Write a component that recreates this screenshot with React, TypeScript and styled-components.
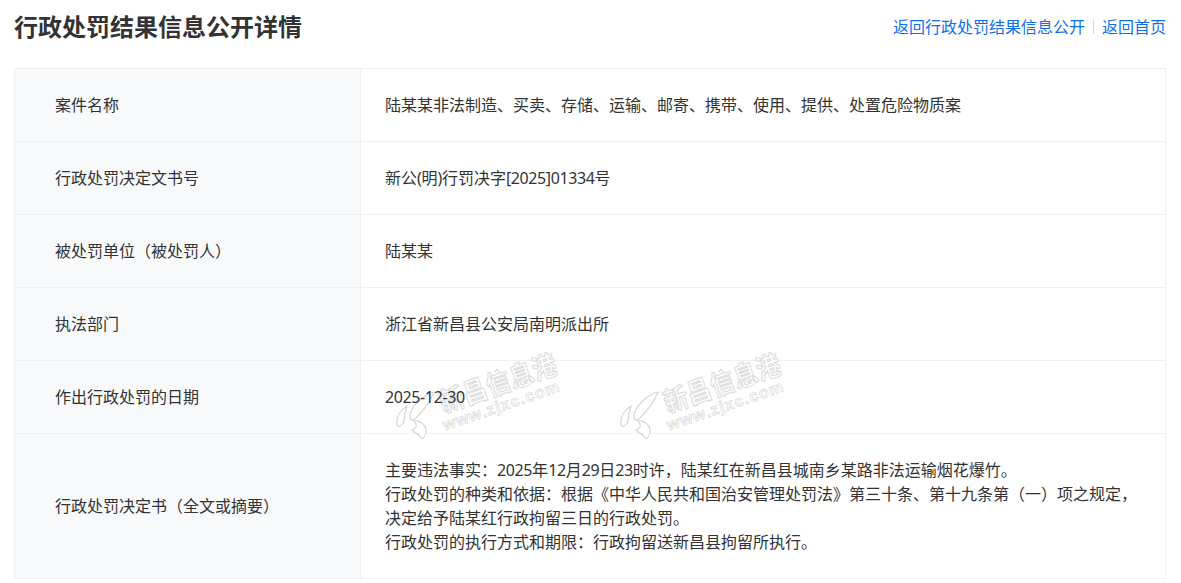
import React from "react";
import styled, { createGlobalStyle } from "styled-components";

const Global = createGlobalStyle`
  html, body { margin: 0; padding: 0; background: #fff; }
  body { font-family: "Noto Sans", "Noto Sans CJK SC", sans-serif; color: #333; overflow: hidden; }
`;

const Page = styled.div`
  position: relative;
  width: 1181px;
  height: 583px;
  padding: 0 15px 0 14px;
  box-sizing: border-box;
  overflow: hidden;
`;

const Header = styled.header`
  display: flex;
  align-items: center;
  justify-content: space-between;
  height: 68px;
  padding-bottom: 14px;
  box-sizing: border-box;
`;

const Title = styled.h1`
  margin: 0;
  font-size: 24px;
  line-height: 32px;
  font-weight: 700;
  color: #333;
`;

const Nav = styled.nav`
  display: flex;
  align-items: center;
`;

const NavLink = styled.a`
  font-size: 16px;
  line-height: 24px;
  color: #0f6fec;
  text-decoration: none;
`;

const NavDivider = styled.span`
  width: 1px;
  height: 14px;
  margin: 0 8px;
  background: #d4d7dc;
`;

const Table = styled.div`
  border: 1px solid #eff0f2;
`;

const Row = styled.div<{ $tall?: boolean }>`
  display: grid;
  grid-template-columns: 346px 1fr;
  min-height: ${(p) => (p.$tall ? 144 : 72)}px;
  & + & { border-top: 1px solid #eff0f2; }
`;

const Label = styled.div`
  display: flex;
  align-items: center;
  padding-left: 40px;
  background: #f8f9fb;
  border-right: 1px solid #eff0f2;
  font-size: 16px;
  line-height: 24px;
  color: #333;
`;

const Value = styled.div`
  position: relative;
  z-index: 1;
  display: flex;
  align-items: center;
  padding: 0 24px;
  font-size: 16px;
  line-height: 24px;
  color: #333;
`;

const Lines = styled.div`
  display: flex;
  flex-direction: column;
`;

const Latin = styled.span`
  letter-spacing: -0.38px;
`;

const Mark = styled.div<{ $x: number }>`
  position: absolute;
  left: ${(p) => p.$x}px;
  top: 352px;
  width: 170px;
  height: 90px;
  pointer-events: none;
`;

const MarkLogo = styled.svg`
  position: absolute;
  left: 0;
  top: 32px;
  width: 42px;
  height: 58px;
`;

const MarkName = styled.div`
  position: absolute;
  left: 41px;
  top: 16px;
  font-size: 24px;
  line-height: 30px;
  font-weight: 700;
  letter-spacing: 0.5px;
  white-space: nowrap;
  color: #fff;
  -webkit-text-stroke: 1px #dddddd;
  transform: rotate(-19deg) scale(1, 1.15);
`;

const MarkUrl = styled.div`
  position: absolute;
  left: 44px;
  top: 45px;
  font-family: "Liberation Sans", sans-serif;
  font-size: 16px;
  line-height: 18px;
  font-weight: 700;
  letter-spacing: 1.2px;
  white-space: nowrap;
  color: #fff;
  -webkit-text-stroke: 0.7px #d8d8d8;
  transform: rotate(-19deg);
`;

const rows: [string, string][] = [
  ["案件名称", "陆某某非法制造、买卖、存储、运输、邮寄、携带、使用、提供、处置危险物质案"],
  ["行政处罚决定文书号", "新公(明)行罚决字[2025]01334号"],
  ["被处罚单位（被处罚人）", "陆某某"],
  ["执法部门", "浙江省新昌县公安局南明派出所"],
  ["作出行政处罚的日期", "2025-12-30"],
];

const details = [
  "主要违法事实：2025年12月29日23时许，陆某红在新昌县城南乡某路非法运输烟花爆竹。",
  "行政处罚的种类和依据：根据《中华人民共和国治安管理处罚法》第三十条、第十九条第（一）项之规定，",
  "决定给予陆某红行政拘留三日的行政处罚。",
  "行政处罚的执行方式和期限：行政拘留送新昌县拘留所执行。",
];

const withLatin = (text: string) =>
  text.split(/([\x20-\x7e]+)/).map((part, i) => (i % 2 ? <Latin key={i}>{part}</Latin> : part));

const Watermark = ({ x }: { x: number }) => (
  <Mark $x={x}>
    <MarkLogo viewBox="0 0 42 58" fill="#fff" stroke="#d6d6d6" strokeWidth="1.2">
      <path d="M38 8C30 10 18 18 14 30C13 36 17 38 20 34C26 28 34 18 38 8Z" />
      <path d="M11 22C4 26 0 34 1 40C2 44 6 42 8 38C8 32 9 27 11 22Z" />
      <path d="M18 37C24 36 29 40 30 46C30 52 27 56 25 54C24 50 18 49 16 46C19 45 21 43 20 40Z" />
    </MarkLogo>
    <MarkName>新昌信息港</MarkName>
    <MarkUrl>www.zjxc.com</MarkUrl>
  </Mark>
);

export default function App() {
  return (
    <Page>
      <Global />
      <Header>
        <Title>行政处罚结果信息公开详情</Title>
        <Nav>
          <NavLink href="#">返回行政处罚结果信息公开</NavLink>
          <NavDivider />
          <NavLink href="#">返回首页</NavLink>
        </Nav>
      </Header>
      <Table>
        {rows.map(([label, value]) => (
          <Row key={label}>
            <Label>{label}</Label>
            <Value>{withLatin(value)}</Value>
          </Row>
        ))}
        <Row $tall>
          <Label>行政处罚决定书（全文或摘要）</Label>
          <Value>
            <Lines>
              {details.map((line) => (
                <span key={line}>{withLatin(line)}</span>
              ))}
            </Lines>
          </Value>
        </Row>
      </Table>
      <Watermark x={396} />
      <Watermark x={620} />
    </Page>
  );
}
